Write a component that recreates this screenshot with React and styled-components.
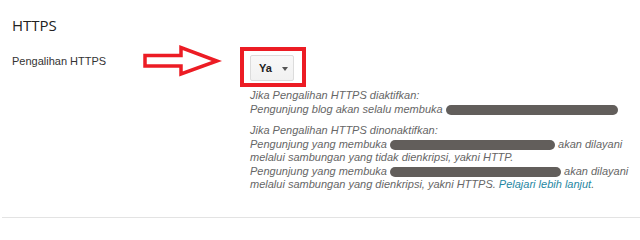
import React from 'react';
import styled, { createGlobalStyle } from 'styled-components';

const GlobalStyle = createGlobalStyle`
  html, body {
    margin: 0;
    padding: 0;
    background: #fff;
  }

  body {
    font-family: "Liberation Sans", Arial, sans-serif;
    font-size: 11px;
    color: #333;
  }
`;

const Section = styled.section`
  width: 640px;
  height: 240px;
  overflow: hidden;
`;

const Body = styled.div`
  padding: 15px 0 25px 12px;
`;

const Title = styled.h2`
  margin: 0 0 12px;
  font-family: "Open Sans", sans-serif;
  font-size: 15px;
  line-height: 20px;
  font-weight: 400;
  color: #222;
`;

const Row = styled.div`
  position: relative;
  display: grid;
  grid-template-columns: 228px auto;
  align-items: start;
`;

const Label = styled.div`
  padding-top: 7px;
  font-size: 11px;
  line-height: 14px;
  color: #333;
`;

const Pointer = styled.svg`
  position: absolute;
  left: 130px;
  top: -4px;
`;

const Control = styled.div`
  display: flex;
  flex-direction: column;
  align-items: flex-start;
`;

const Highlight = styled.div`
  border: 4px solid #ec1c24;
  padding: 4px 8px 2px 6px;
`;

const Select = styled.button`
  display: flex;
  align-items: center;
  gap: 10px;
  width: 44px;
  height: 26px;
  padding: 0 0 0 8px;
  border: 1px solid #dcdcdc;
  border-radius: 2px;
  background: linear-gradient(#f8f8f8, #f1f1f1);
  font-family: "Liberation Sans", Arial, sans-serif;
  font-size: 11px;
  font-weight: 700;
  color: #222;
  cursor: pointer;
`;

const Caret = styled.span`
  width: 0;
  height: 0;
  margin-top: 2px;
  border-left: 3.5px solid transparent;
  border-right: 3.5px solid transparent;
  border-top: 4px solid #555;
`;

const Help = styled.div`
  margin: 2px 0 0 10px;
  display: flex;
  flex-direction: column;
  gap: 8px;
  font-style: italic;
  font-size: 11px;
  line-height: 13.5px;
  color: #666;
  white-space: nowrap;
`;

const Para = styled.div`
  display: flex;
  flex-direction: column;
`;

const Redacted = styled.span`
  display: inline-block;
  width: ${(p) => p.$w}px;
  height: 10px;
  margin-right: ${(p) => p.$gap || 0}px;
  border-radius: 5px;
  background: #625e5b;
  vertical-align: -2px;
`;

const Link = styled.a`
  color: #1f87a2;
  text-decoration: none;
`;

const Divider = styled.hr`
  margin: 0 0 0 2px;
  border: 0;
  border-top: 1px solid #e3e3e3;
`;

export default function App() {
  return (
    <Section>
      <GlobalStyle />
      <Body>
        <Title>HTTPS</Title>
        <Row>
          <Label>Pengalihan HTTPS</Label>
          <Pointer width="80" height="36" viewBox="0 0 80 36">
            <path
              d="M3 12.5 H39 V4.5 L75 18 L39 31 V23 H3 Z"
              fill="#fff"
              stroke="#ec1c24"
              strokeWidth="3.5"
              strokeLinejoin="miter"
            />
          </Pointer>
          <Control>
            <Highlight>
              <Select type="button">
                Ya
                <Caret />
              </Select>
            </Highlight>
            <Help>
              <Para>
                <span>Jika Pengalihan HTTPS diaktifkan:</span>
                <span>Pengunjung blog akan selalu membuka <Redacted $w={172} /></span>
              </Para>
              <Para>
                <span>Jika Pengalihan HTTPS dinonaktifkan:</span>
                <span>Pengunjung yang membuka <Redacted $w={165} $gap={3} />akan dilayani</span>
                <span>melalui sambungan yang tidak dienkripsi, yakni HTTP.</span>
                <span>Pengunjung yang membuka <Redacted $w={171} $gap={3} />akan dilayani</span>
                <span>
                  melalui sambungan yang dienkripsi, yakni HTTPS. <Link href="#">Pelajari lebih lanjut</Link>.
                </span>
              </Para>
            </Help>
          </Control>
        </Row>
      </Body>
      <Divider />
    </Section>
  );
}
